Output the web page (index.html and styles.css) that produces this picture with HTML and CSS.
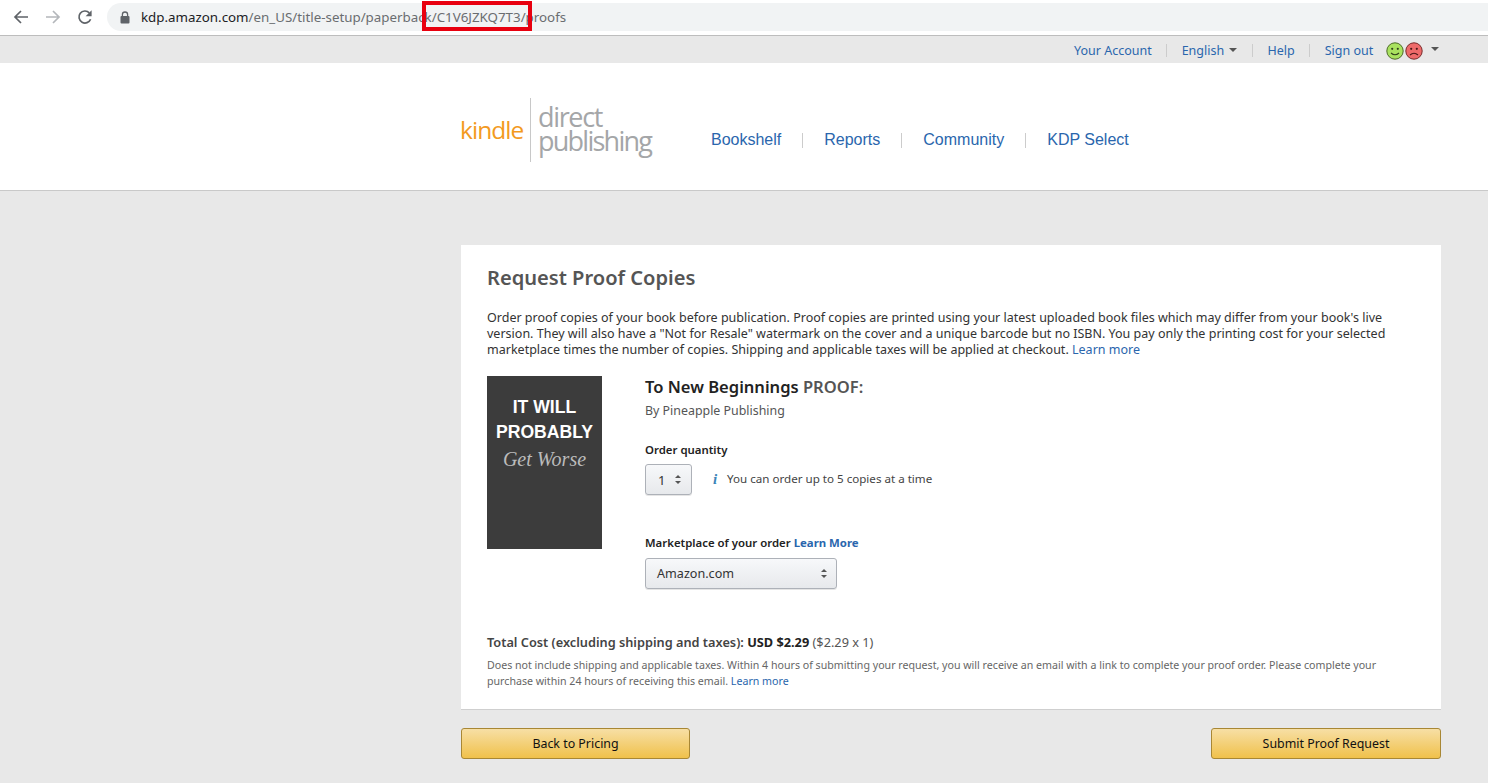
FILE: index.html
```html
<!DOCTYPE html>
<html lang="en">
<head>
<meta charset="utf-8">
<title>Request Proof Copies</title>
<link rel="stylesheet" href="styles.css">
</head>
<body>
<div class="chrome">
  <div class="nav-icons">
    <svg class="nav-icon" viewBox="0 0 16 16"><path d="M15 8H2.5M8 2 2 8l6 6" fill="none" stroke="#5f6368" stroke-width="1.7"/></svg>
    <svg class="nav-icon" viewBox="0 0 16 16"><path d="M1 8h12.5M8 2l6 6-6 6" fill="none" stroke="#b4b7bb" stroke-width="1.7"/></svg>
    <svg class="nav-icon" viewBox="0 0 16 16"><path d="M13.6 10.2A6 6 0 1 1 12.3 3.8" fill="none" stroke="#5f6368" stroke-width="1.7"/><path d="M14.6 1.2v6h-6z" fill="#5f6368"/></svg>
  </div>
  <div class="omnibox">
    <svg class="lock" viewBox="0 0 10 13"><path d="M2.4 5.5V3.6a2.6 2.6 0 0 1 5.2 0v1.9" fill="none" stroke="#5f6368" stroke-width="1.3"/><rect x="0.5" y="5" width="9" height="7.5" rx="1" fill="#5f6368"/></svg>
    <span class="url"><span class="url-host">kdp.amazon.com</span>/en_US/title-setup/paperback/C1V6JZKQ7T3/proofs</span>
    <div class="red-box"></div>
  </div>
</div>

<div class="account-bar">
  <a class="link" href="#">Your Account</a><span class="sep"></span>
  <a class="link" href="#">English <i class="caret"></i></a><span class="sep"></span>
  <a class="link" href="#">Help</a><span class="sep"></span>
  <a class="link" href="#">Sign out</a>
  <span class="faces">
    <svg class="face" viewBox="0 0 18 18"><circle cx="9" cy="9" r="8.2" fill="#a9e25f" stroke="#4f6b2a"/><circle cx="6.2" cy="6.8" r="1.1" fill="#33421c"/><circle cx="11.8" cy="6.8" r="1.1" fill="#33421c"/><path d="M5 11q4 3.6 8 0" fill="none" stroke="#33421c" stroke-width="1.1"/></svg>
    <svg class="face" viewBox="0 0 18 18"><circle cx="9" cy="9" r="8.2" fill="#ee6a6a" stroke="#7a2c2c"/><circle cx="6.2" cy="6.8" r="1.1" fill="#4a1818"/><circle cx="11.8" cy="6.8" r="1.1" fill="#4a1818"/><path d="M5 13q4-3.6 8 0" fill="none" stroke="#4a1818" stroke-width="1.1"/></svg>
  </span>
  <i class="caret caret-end"></i>
</div>

<header class="site-header">
  <div class="logo">
    <span class="logo-kindle">kindle</span>
    <span class="logo-rule"></span>
    <span class="logo-dp"><span>direct</span><span class="logo-pub">publishing</span></span>
  </div>
  <nav class="main-nav">
    <a class="nav-link" href="#">Bookshelf</a><span class="nav-sep"></span>
    <a class="nav-link" href="#">Reports</a><span class="nav-sep"></span>
    <a class="nav-link" href="#">Community</a><span class="nav-sep"></span>
    <a class="nav-link" href="#">KDP Select</a>
  </nav>
</header>

<main class="page">
  <section class="card">
    <h1 class="title">Request Proof Copies</h1>
    <p class="intro">Order proof copies of your book before publication. Proof copies are printed using your latest uploaded book files which may differ from your book's live version. They will also have a "Not for Resale" watermark on the cover and a unique barcode but no ISBN. You pay only the printing cost for your selected marketplace times the number of copies. Shipping and applicable taxes will be applied at checkout. <a class="link" href="#">Learn more</a></p>
    <div class="book">
      <div class="cover">
        <div class="cover-big">IT WILL</div>
        <div class="cover-big">PROBABLY</div>
        <div class="cover-script">Get Worse</div>
      </div>
      <div class="details">
        <h2 class="book-title">To New Beginnings <span class="proof">PROOF:</span></h2>
        <div class="byline">By Pineapple Publishing</div>
        <div class="label label-qty">Order quantity</div>
        <div class="qty-row">
          <div class="select select-qty"><span>1</span><i class="updown"></i></div>
          <span class="info-i">i</span>
          <span class="info-text">You can order up to 5 copies at a time</span>
        </div>
        <div class="label label-market">Marketplace of your order <a class="link strong" href="#">Learn More</a></div>
        <div class="select select-market"><span>Amazon.com</span><i class="updown"></i></div>
      </div>
    </div>
    <div class="total"><b>Total Cost (excluding shipping and taxes):</b> <b class="usd">USD $2.29</b> <span class="calc">($2.29 x 1)</span></div>
    <p class="fine">Does not include shipping and applicable taxes. Within 4 hours of submitting your request, you will receive an email with a link to complete your proof order. Please complete your purchase within 24 hours of receiving this email. <a class="link" href="#">Learn more</a></p>
  </section>
  <div class="actions">
    <button class="btn btn-back" type="button">Back to Pricing</button>
    <button class="btn" type="button">Submit Proof Request</button>
  </div>
</main>
</body>
</html>
```

FILE: styles.css
```css
* { box-sizing: border-box; }
html, body { margin: 0; padding: 0; }
body {
  width: 1488px;
  height: 783px;
  overflow: hidden;
  background: #e8e8e8;
  font-family: "Noto Sans", "Open Sans", sans-serif;
  color: #333;
}
a { text-decoration: none; }
.link { color: #2a66ad; }
.strong { font-weight: 700; }

.chrome {
  height: 36px;
  background: #fff;
  border-bottom: 1px solid #bdbdbd;
  display: flex;
  align-items: flex-start;
  padding: 3px 0 0 13px;
}
.nav-icons { display: flex; gap: 16px; width: 94px; padding-top: 6px; flex: none; }
.nav-icon { width: 16px; height: 16px; }
.omnibox {
  position: relative;
  flex: 1;
  height: 28px;
  background: #f1f3f4;
  border-radius: 14px 0 0 14px;
  display: flex;
  align-items: center;
  padding-left: 13px;
}
.lock { width: 10px; height: 13px; margin-right: 11px; }
.url { font-size: 13.33px; color: #6a6d70; white-space: nowrap; }
.url-host { color: #202124; }
.red-box {
  position: absolute;
  left: 315px;
  top: -2px;
  width: 110px;
  height: 30px;
  border: 4px solid #e8000f;
}

.account-bar {
  height: 27px;
  background: #e8e8e8;
  display: flex;
  align-items: center;
  padding: 2px 0 0 1074px;
  font-size: 12.5px;
}
.sep { width: 1px; height: 13px; background: #ccc; margin: 0 15px 0 14px; }
.sep:nth-of-type(2) { margin-right: 14px; }
.caret {
  display: inline-block;
  width: 0; height: 0;
  border-left: 4px solid transparent;
  border-right: 4px solid transparent;
  border-top: 4px solid #555;
  vertical-align: 3px;
  margin: 0 1px 0 2px;
}
.faces { display: flex; gap: 1px; margin-left: 13px; }
.face { width: 18px; height: 18px; }
.caret-end { margin-left: 8px; margin-top: -4px; }

.site-header {
  height: 128px;
  background: #fff;
  border-bottom: 1px solid #c9c9c9;
  display: flex;
  align-items: flex-start;
  padding: 35px 0 0 460px;
}
.logo { display: flex; align-items: flex-start; width: 251px; flex: none; font-family: "Open Sans", sans-serif; font-weight: 400; }
.logo-kindle { font-size: 24.5px; line-height: 30px; color: #f39a1e; margin-top: 17px; letter-spacing: -0.95px; width: 70px; }
.logo-rule { width: 1px; height: 64px; background: #c8c8c8; }
.logo-dp {
  display: flex;
  flex-direction: column;
  margin-left: 7px;
  color: #a4a6a8;
  font-size: 27px;
  line-height: 24px;
  letter-spacing: -1.35px;
  margin-top: 7px;
}
.logo-pub { letter-spacing: -1.75px; }
.main-nav { display: flex; align-items: center; height: 22px; margin-top: 31px; font-family: "Liberation Sans", Arial, sans-serif; font-size: 16px; }
.nav-link { color: #2a66ad; }
.nav-sep { width: 1px; height: 15px; background: #ccc; margin: 0 21px; }

.page { width: 980px; margin: 54px 0 0 461px; }
.card {
  height: 465px;
  background: #fff;
  border-bottom: 1px solid #cfcfcf;
  padding: 19px 26px 0;
}
.title { margin: 0; font-size: 20.1px; line-height: 27px; font-weight: 600; color: #555; }
.intro { margin: 19px 0 0; font-size: 12.53px; line-height: 16px; color: #333; }
.book { display: flex; margin-top: 18px; height: 258px; }
.cover {
  width: 115px;
  height: 173px;
  background: #3c3c3c;
  color: #fff;
  flex: none;
  text-align: center;
  padding-top: 19px;
  font-family: "Liberation Sans", sans-serif;
}
.cover-big { font-size: 17.6px; line-height: 25px; font-weight: 700; white-space: nowrap; }
.cover-script { font-family: "Liberation Serif", serif; font-style: italic; font-size: 20px; line-height: 22px; color: #bbb; margin-top: 3px; }
.details { margin-left: 43px; }
.book-title { margin: 0; font-size: 16.55px; line-height: 21px; font-weight: 600; color: #222; }
.proof { color: #555; }
.byline { margin-top: 5px; font-size: 12.4px; line-height: 18px; color: #555; }
.label { font-size: 11.4px; line-height: 16px; font-weight: 600; color: #222; }
.label-qty { margin-top: 22px; }
.qty-row { display: flex; align-items: center; margin-top: 6px; }
.select {
  display: flex;
  align-items: center;
  justify-content: space-between;
  height: 31px;
  border: 1px solid #adb1b8;
  border-radius: 3px;
  background: linear-gradient(#f7f8fa, #e7e9ec);
  color: #333;
  font-size: 13px;
  box-shadow: 0 1px 0 rgba(0,0,0,.1);
}
.select-qty { width: 47px; padding: 0 10px 0 12px; }
.select-market { width: 192px; padding: 0 9px 0 11px; margin-top: 7px; font-size: 12.6px; }
.updown { display: block; width: 6px; height: 9px; position: relative; }
.updown::before, .updown::after {
  content: "";
  position: absolute;
  left: 0;
  border-left: 3px solid transparent;
  border-right: 3px solid transparent;
}
.updown::before { top: 0; border-bottom: 3px solid #555; }
.updown::after { bottom: 0; border-top: 3px solid #555; }
.info-i { margin-left: 21px; font-family: "Liberation Serif", serif; font-style: italic; font-weight: 700; font-size: 15px; color: #3b84b8; line-height: 1; width: 14px; }
.info-text { font-size: 11.6px; color: #444; margin-top: -2px; }
.label-market { margin-top: 40px; }
.total { font-size: 12.75px; line-height: 16px; color: #444; }
.total b { font-weight: 600; }
.total .usd { color: #222; font-weight: 700; }
.calc { color: #555; }
.fine { margin: 7px 0 0; font-size: 10.63px; line-height: 16px; color: #666; }

.actions { display: flex; justify-content: space-between; margin-top: 18px; }
.btn {
  width: 230px;
  height: 31px;
  border: 1px solid #a88734;
  border-radius: 3px;
  background: linear-gradient(#f7dfa5, #f0c14b);
  color: #111;
  font-family: "Noto Sans", sans-serif;
  font-size: 12.4px;
  padding: 0;
}
.btn-back { width: 229px; }
```
